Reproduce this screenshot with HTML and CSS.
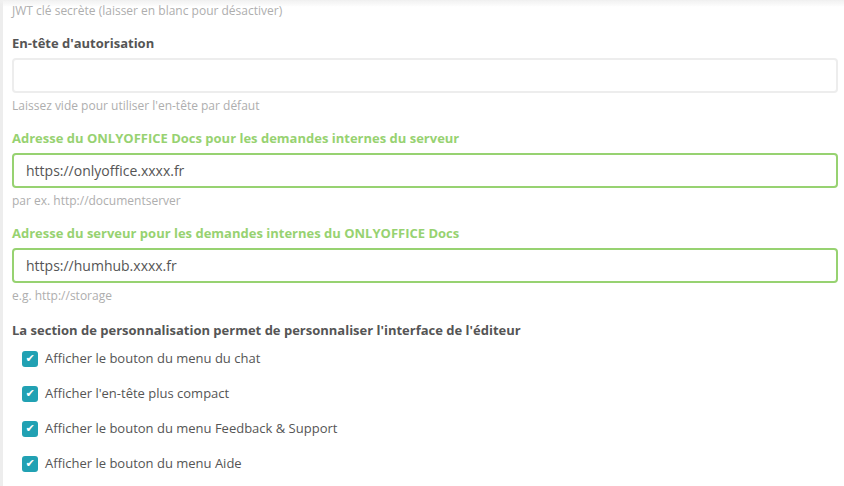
FILE: index.html
```html
<html>
  <head>
    <link rel="stylesheet" href="styles.css">
    <title>ONLYOFFICE - Configuration</title>
  </head>
  <body>
    <div class="topshade"></div>
    <form class="panel">
      <p class="help first">JWT clé secrète (laisser en blanc pour désactiver)</p>

      <div class="group">
        <label class="label">En-tête d'autorisation</label>
        <input class="field" type="text" value="">
        <p class="help">Laissez vide pour utiliser l'en-tête par défaut</p>
      </div>

      <div class="group ok">
        <label class="label">Adresse du ONLYOFFICE Docs pour les demandes internes du serveur</label>
        <input class="field" type="text" value="https://onlyoffice.xxxx.fr">
        <p class="help">par ex. http://documentserver</p>
      </div>

      <div class="group ok">
        <label class="label">Adresse du serveur pour les demandes internes du ONLYOFFICE Docs</label>
        <input class="field" type="text" value="https://humhub.xxxx.fr">
        <p class="help">e.g. http://storage</p>
      </div>

      <div class="group custom">
        <label class="label">La section de personnalisation permet de personnaliser l'interface de l'éditeur</label>
        <div class="checks">
          <label class="check"><span class="box">✔</span>Afficher le bouton du menu du chat</label>
          <label class="check"><span class="box">✔</span>Afficher l'en-tête plus compact</label>
          <label class="check"><span class="box">✔</span>Afficher le bouton du menu Feedback &amp; Support</label>
          <label class="check"><span class="box">✔</span>Afficher le bouton du menu Aide</label>
        </div>
      </div>
    </form>
  </body>
</html>
```

FILE: styles.css
```css
body {
  margin: 0;
  background: #fff;
  font-family: "Open Sans", "Liberation Sans", sans-serif;
  color: #555;
  border-left: 3px solid #ededed;
  min-height: 100vh;
  box-sizing: border-box;
}

.topshade {
  position: fixed;
  top: 0;
  left: 0;
  right: 0;
  height: 7px;
  background: linear-gradient(#f0f0f0, rgba(255, 255, 255, 0));
}

.panel {
  padding: 2px 6px 0 9px;
  margin: 0;
}

.help {
  margin: 4px 0 0;
  font-size: 12px;
  line-height: 17px;
  color: #aeaeae;
}

.help.first {
  margin: 0;
}

.group {
  margin-top: 15px;
}

.group.custom {
  margin-top: 17px;
}

.label {
  display: block;
  font-size: 13px;
  font-weight: 700;
  line-height: 18px;
  margin-bottom: 6px;
  color: #555;
}

.field {
  display: block;
  width: 100%;
  box-sizing: border-box;
  height: 35px;
  border: 2px solid #ededed;
  border-radius: 4px;
  padding: 0 12px;
  font-family: inherit;
  font-size: 14px;
  color: #555;
  background: #fff;
  outline: none;
}

.ok .label {
  color: #97d271;
}

.ok .label + .field {
  border-color: #97d271;
}

.checks {
  display: flex;
  flex-direction: column;
  gap: 16px;
  padding: 4px 0 0 10px;
}

.check {
  display: flex;
  align-items: center;
  gap: 7px;
  font-size: 13px;
  line-height: 19px;
  color: #555;
}

.box {
  width: 16px;
  height: 16px;
  border-radius: 3px;
  background: #21a1b3;
  color: #fff;
  font-size: 11px;
  font-weight: 700;
  line-height: 16px;
  text-align: center;
  font-family: "DejaVu Sans", sans-serif;
}
```
